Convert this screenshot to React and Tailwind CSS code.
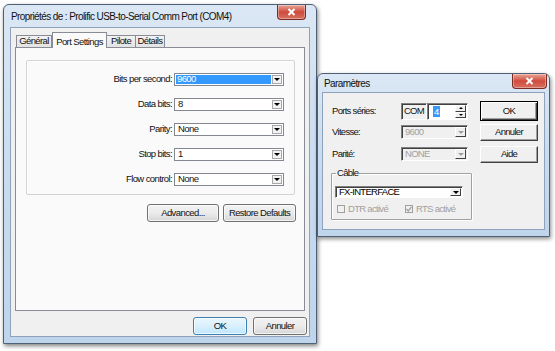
import React from "react";

function CloseButton({ className }) {
  return (
    <div
      className={`absolute top-0 flex items-center justify-center rounded-b-[4px] border border-t-0 border-[#7b2b23] bg-gradient-to-b from-[#e7a597] via-[#cf4a3c] to-[#d6705f] shadow-[inset_0_0_0_1px_rgba(255,255,255,0.35)] ${className}`}
    >
      <svg width="9" height="8" viewBox="0 0 9 8">
        <path d="M1.5 1 L7.5 7 M7.5 1 L1.5 7" stroke="#fff" strokeWidth="2" />
      </svg>
    </div>
  );
}

function Arrow({ color = "border-t-black" }) {
  return (
    <div className={`h-0 w-0 border-x-[3px] border-t-[3px] border-x-transparent ${color}`} />
  );
}

// Windows 7 style combo on the property page
function Combo({ value, selected }) {
  return (
    <div className="flex h-[13px] w-[110px] items-center border border-[#828790] bg-white">
      <div className="flex h-full flex-1 items-center p-[1px]">
        {selected ? (
          <span className="flex h-full w-full items-center bg-[#3399ff] pl-[1px] text-white">{value}</span>
        ) : (
          <span className="pl-[2px]">{value}</span>
        )}
      </div>
      <div className="mr-[1px] flex h-[9px] w-[10px] items-center justify-center border border-[#a8a8a8] bg-[#f2f2f2]">
        <Arrow />
      </div>
    </div>
  );
}

function Win7Button({ children, primary, className }) {
  return (
    <div
      className={`flex items-center justify-center rounded-[3px] border shadow-[inset_0_0_0_1px_rgba(255,255,255,0.7)] ${
        primary
          ? "border-[#3c7fb1] bg-gradient-to-b from-[#eaf6fd] via-[#d9f0fc] to-[#bee6fd]"
          : "border-[#707070] bg-gradient-to-b from-[#f2f2f2] via-[#ebebeb] to-[#d6d6d6]"
      } ${className}`}
    >
      {children}
    </div>
  );
}

function ClassicButton({ children, isDefault, className }) {
  return (
    <div
      className={`flex items-center justify-center bg-[#f0f0f0] ${
        isDefault
          ? "border border-black shadow-[inset_1px_1px_0_#fff,inset_-1px_-1px_0_#404040,inset_-2px_-2px_0_#a0a0a0]"
          : "border border-t-white border-l-white border-r-[#404040] border-b-[#404040] shadow-[inset_-1px_-1px_0_#a0a0a0]"
      } ${className}`}
    >
      {children}
    </div>
  );
}

function ClassicCombo({ value, disabled, className }) {
  return (
    <div
      className={`flex items-center border border-t-[#808080] border-l-[#808080] border-r-white border-b-white shadow-[inset_1px_1px_0_#404040] ${
        disabled ? "bg-[#f0f0f0] text-[#a0a0a0]" : "bg-white text-black"
      } ${className}`}
    >
      <span className="flex-1 pl-[3px]">{value}</span>
      <div className="mr-[1px] flex h-[calc(100%-2px)] w-[11px] items-center justify-center border border-t-white border-l-white border-r-[#404040] border-b-[#404040] bg-[#f0f0f0]">
        <Arrow color={disabled ? "border-t-[#a0a0a0]" : "border-t-black"} />
      </div>
    </div>
  );
}

function Check({ checked }) {
  return (
    <div className="flex h-[8px] w-[8px] items-center justify-center border border-[#a0a0a0] bg-[#f0f0f0]">
      {checked && (
        <svg width="6" height="6" viewBox="0 0 6 6">
          <path d="M0.5 3 L2.3 5 L5.5 0.8" stroke="#a0a0a0" strokeWidth="1.3" fill="none" />
        </svg>
      )}
    </div>
  );
}

const rows = [
  { label: "Bits per second:", value: "9600", selected: true },
  { label: "Data bits:", value: "8" },
  { label: "Parity:", value: "None" },
  { label: "Stop bits:", value: "1" },
  { label: "Flow control:", value: "None" },
];

const tabs = [
  { name: "Général", w: "w-[36px]" },
  { name: "Port Settings", w: "w-[55px]", active: true },
  { name: "Pilote", w: "w-[30px]" },
  { name: "Détails", w: "w-[30px]" },
];

export default function App() {
  return (
    <div className="relative h-[351px] w-[555px] overflow-hidden bg-white font-['Liberation_Sans',Arial,sans-serif] text-[9.5px] tracking-[-0.6px] text-[#111]">
      {/* Properties window */}
      <div className="absolute left-[3px] top-[4px] flex h-[340px] w-[314px] flex-col rounded-t-[6px] border border-[#4f5f74] bg-gradient-to-b from-[#dbe7f4] via-[#c9dcf0] to-[#bfd5ec] px-[6px] pb-[6px] shadow-[1px_2px_4px_rgba(0,0,0,0.5)]">
        <div className="flex h-[22px] items-center pl-[1px] text-[10px] tracking-[-0.6px]">
          Propriétés de : Prolific USB-to-Serial Comm Port (COM4)
        </div>
        <CloseButton className="right-[10px] h-[15px] w-[29px]" />

        <div className="flex flex-1 flex-col border border-[#8ea2bd] bg-[#f0f0f0]">
          {/* Tabs */}
          <div className="relative z-10 -mb-px ml-[5px] mt-[4px] flex h-[16px] items-end">
            {tabs.map((t) =>
              t.active ? (
                <div
                  key={t.name}
                  className={`flex h-[16px] items-start justify-center border border-b-0 border-[#898c95] bg-[#fafafa] pt-[2px] ${t.w}`}
                >
                  {t.name}
                </div>
              ) : (
                <div
                  key={t.name}
                  className={`-ml-px flex h-[13px] items-center justify-center border border-[#898c95] bg-gradient-to-b from-[#f2f2f2] to-[#e3e3e3] first:ml-0 ${t.w}`}
                >
                  {t.name}
                </div>
              )
            )}
          </div>

          {/* Tab page */}
          <div className="mx-[4px] flex h-[264px] flex-col border border-[#898c95] bg-[#fafafa]">
            <div className="ml-[10px] mr-[9px] mt-[12px] rounded-[2px] border border-[#cfd4d8] pb-[8px] pt-[12px] shadow-[inset_1px_1px_0_#fff]">
              <div className="grid grid-cols-[145px_110px] gap-x-[2px] gap-y-[12px]">
                {rows.map((r) => (
                  <React.Fragment key={r.label}>
                    <div className="flex h-[13px] items-center justify-end">{r.label}</div>
                    <Combo value={r.value} selected={r.selected} />
                  </React.Fragment>
                ))}
              </div>
            </div>
            <div className="mr-[8px] mt-[9px] flex justify-end gap-[4px]">
              <Win7Button className="h-[18px] w-[72px]">Advanced...</Win7Button>
              <Win7Button className="h-[18px] w-[73px]">Restore Defaults</Win7Button>
            </div>
          </div>

          <div className="mr-[2px] mt-[6px] flex justify-end gap-[6px]">
            <Win7Button primary className="h-[18px] w-[54px]">OK</Win7Button>
            <Win7Button className="h-[18px] w-[54px]">Annuler</Win7Button>
          </div>
        </div>
      </div>

      {/* Paramètres dialog */}
      <div className="absolute left-[317px] top-[73px] flex h-[164px] w-[233px] flex-col rounded-t-[6px] border border-[#4f5f74] bg-gradient-to-b from-[#dbe7f4] via-[#c9dcf0] to-[#bfd5ec] px-[4px] pb-[6px] shadow-[1px_2px_4px_rgba(0,0,0,0.45)]">
        <div className="flex h-[18px] items-center pl-[2px] text-[10px] tracking-[-0.6px]">Paramètres</div>
        <CloseButton className="right-[2px] h-[15px] w-[35px]" />

        <div className="flex flex-1 border border-[#8ea2bd] bg-[#f0f0f0] tracking-[-0.7px]">
          <div className="ml-[8px] flex w-[141px] flex-col pt-[10px]">
            <div className="flex h-[17px] items-center">
              <div className="w-[70px] pl-[1px]">Ports séries:</div>
              <div className="flex h-[17px] w-[26px] items-center justify-center border border-t-[#808080] border-l-[#808080] border-r-white border-b-white bg-[#f0f0f0] shadow-[inset_1px_1px_0_#404040]">
                COM
              </div>
              <div className="flex h-[17px] w-[41px] items-center border border-t-[#808080] border-l-[#808080] border-r-white border-b-white bg-white shadow-[inset_1px_1px_0_#404040]">
                <span className="ml-[5px] bg-[#3399ff] px-[1px] leading-[11px] text-white">4</span>
                <div className="ml-auto mr-[1px] flex h-[13px] w-[11px] flex-col">
                  <div className="flex flex-1 items-center justify-center border border-t-white border-l-white border-r-[#404040] border-b-[#404040] bg-[#f0f0f0]">
                    <div className="h-0 w-0 border-x-[2px] border-b-[2px] border-x-transparent border-b-black" />
                  </div>
                  <div className="flex flex-1 items-center justify-center border border-t-white border-l-white border-r-[#404040] border-b-[#404040] bg-[#f0f0f0]">
                    <div className="h-0 w-0 border-x-[2px] border-t-[2px] border-x-transparent border-t-black" />
                  </div>
                </div>
              </div>
            </div>

            <div className="mt-[5px] flex h-[14px] items-center">
              <div className="w-[70px] pl-[1px]">Vitesse:</div>
              <ClassicCombo value="9600" disabled className="h-[14px] w-[67px]" />
            </div>
            <div className="mt-[8px] flex h-[14px] items-center">
              <div className="w-[70px] pl-[1px]">Parité:</div>
              <ClassicCombo value="NONE" disabled className="h-[14px] w-[67px]" />
            </div>

            <fieldset className="mt-[7px] h-[52px] rounded-[1px] border border-[#a0a0a0] px-[3px] shadow-[1px_1px_0_#fff,inset_1px_1px_0_#fff]">
              <legend className="ml-[1px] px-[1px] leading-[10px]">Câble</legend>
              <ClassicCombo value="FX-INTERFACE" className="mt-[8px] h-[12px] w-[128px]" />
              <div className="mt-[4px] flex items-center text-[#a0a0a0]">
                <div className="flex w-[70px] items-center gap-[3px] pl-[2px]">
                  <Check />
                  <span>DTR activé</span>
                </div>
                <div className="flex items-center gap-[3px]">
                  <Check checked />
                  <span>RTS activé</span>
                </div>
              </div>
            </fieldset>
          </div>

          <div className="ml-[8px] flex w-[58px] flex-col pt-[8px]">
            <ClassicButton isDefault className="h-[20px]">OK</ClassicButton>
            <ClassicButton className="mt-[3px] h-[17px]">Annuler</ClassicButton>
            <ClassicButton className="mt-[5px] h-[17px]">Aide</ClassicButton>
          </div>
        </div>
      </div>
    </div>
  );
}
